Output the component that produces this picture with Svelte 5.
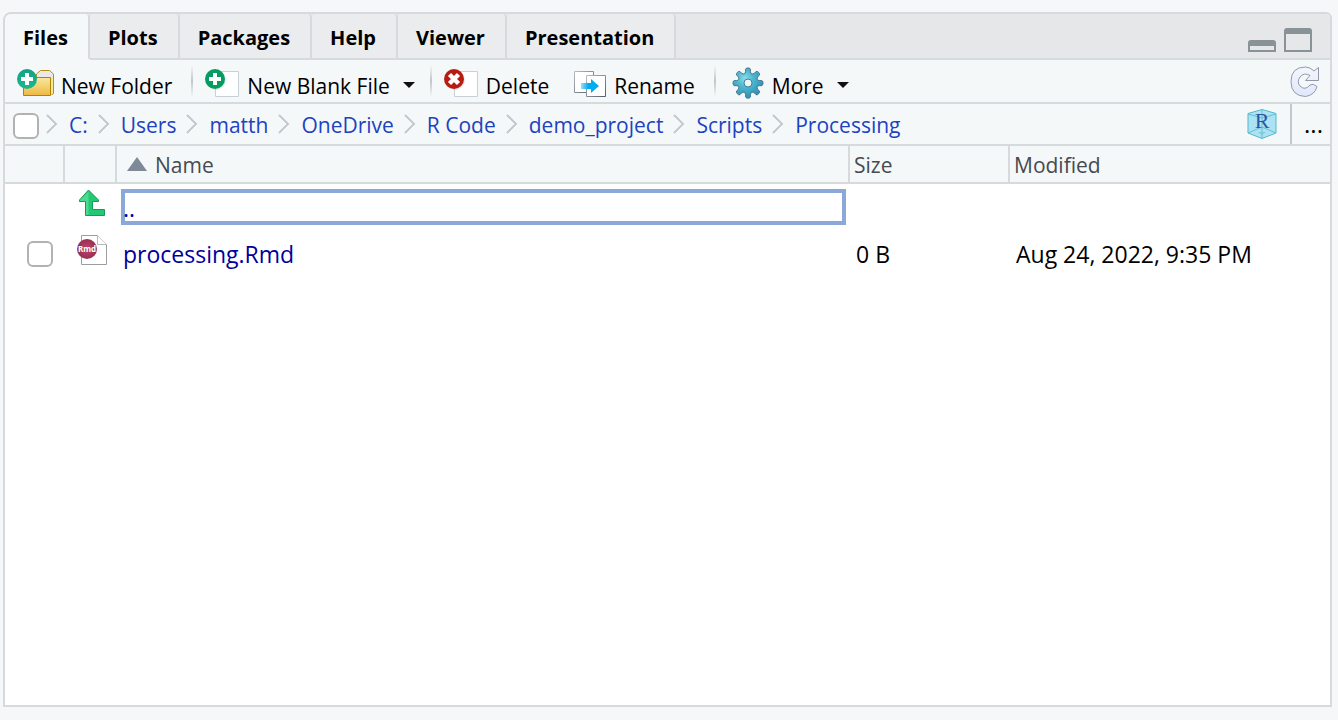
<script>
  const tabs = ['Files', 'Plots', 'Packages', 'Help', 'Viewer', 'Presentation'];
  const crumbs = ['C:', 'Users', 'matth', 'OneDrive', 'R Code', 'demo_project', 'Scripts', 'Processing'];
  let active = $state('Files');
  let all = $state(false);
  let picked = $state(false);
  // Outline of an eight-toothed gear centred on (16, 16)
  const gear = Array.from({ length: 8 }, (_, i) => {
    const p = (r, deg) => {
      const a = ((i * 45 + deg) * Math.PI) / 180;
      return `${(16 + r * Math.sin(a)).toFixed(2)} ${(16 - r * Math.cos(a)).toFixed(2)}`;
    };
    return `${i ? 'L' : 'M'}${p(11.5, -12)}L${p(14, -10)}Q${p(15.4, -7)} ${p(15, 0)}Q${p(15.4, 7)} ${p(14, 10)}L${p(11.5, 12)}Q${p(8.5, 22.5)} ${p(11.5, 33)}`;
  }).join('') + 'Z';
</script>

{#snippet chevron()}
  <svg class="chevron" width="12" height="20" viewBox="0 0 12 20" aria-hidden="true">
    <path d="M2 3L10 11L2 19" fill="none" stroke="#fff" stroke-width="2" />
    <path d="M1 1L10 10L1 19" fill="none" stroke="#c3c7cf" stroke-width="2" />
  </svg>
{/snippet}

{#snippet plus(fill)}
  <circle cx="10" cy="11" r="10" {fill} />
  <path d="M8 5h4v4h4v4h-4v4H8v-4H4V9h4z" fill="#fff" />
{/snippet}

<main class="panel">
  <div class="tabbar">
    <div class="tabs" role="tablist">
      {#each tabs as tab}
        <button role="tab" class="tab" class:active={tab === active} aria-selected={tab === active} onclick={() => (active = tab)}>{tab}</button>
      {/each}
    </div>
    <button class="window" aria-label="Minimize">
      <svg width="28" height="24" viewBox="0 0 28 24"><path d="M0 24V15Q0 12 3 12H25Q28 12 28 15V24ZM2 18V22H26V18Z" fill="#889297" fill-rule="evenodd" /></svg>
    </button>
    <button class="window" aria-label="Maximize">
      <svg width="28" height="24" viewBox="0 0 28 24"><path d="M0 24V3Q0 0 3 0H25Q28 0 28 3V24ZM2 6V22H26V6Z" fill="#889297" fill-rule="evenodd" /></svg>
    </button>
  </div>

  <div class="toolbar">
    <button class="tool">
      <svg width="38" height="30" viewBox="0 0 38 30">
        <defs>
          <linearGradient id="folder" x2="0" y2="1"><stop stop-color="#f7e8a0" /><stop offset="1" stop-color="#efb941" /></linearGradient>
          <linearGradient id="mint" x2="0" y2="1"><stop stop-color="#13a184" /><stop offset="1" stop-color="#1ab990" /></linearGradient>
        </defs>
        <path d="M19.500 9V6L23.500 2.500H32.500L36.500 6V25Q36.500 26.500 34.500 26.500H20Z" fill="#e9e9ea" stroke="#b98c12" />
        <path d="M34 9H36V25L34 27Z" fill="#f7e7a5" />
        <path d="M6.500 9.500H33.500V27.500H6.500Z" fill="url(#folder)" stroke="#b58200" />
        {@render plus('url(#mint)')}
      </svg>
      <span>New Folder</span>
    </button>
    <i class="rule"></i>
    <button class="tool">
      <svg width="36" height="30" viewBox="0 0 36 30">
        <path d="M10.500 3.500H33.500V28.500H10.500Z" fill="#fff" stroke="#c9d1d8" />
        <circle cx="11" cy="12" r="10" fill="#809b9030" />
        {@render plus('#059c62')}
      </svg>
      <span>New Blank File</span>
      <i class="caret"></i>
    </button>
    <i class="rule after-menu"></i>
    <button class="tool">
      <svg width="36" height="30" viewBox="0 0 36 30">
        <path d="M10.500 3.500H33.500V28.500H10.500Z" fill="#fff" stroke="#c9d1d8" />
        <circle cx="11" cy="12" r="10" fill="#9a757030" />
        <circle cx="10" cy="11" r="10" fill="#b71c12" />
        <path d="M5.500 6.500L14.500 15.500M14.500 6.500L5.500 15.500" stroke="#fff" stroke-width="4.500" />
      </svg>
      <span>Delete</span>
    </button>
    <button class="tool rename">
      <svg width="32" height="30" viewBox="0 0 32 30">
        <defs>
          <linearGradient id="arrow"><stop stop-color="#9adffa" /><stop offset=".4" stop-color="#00aef0" /></linearGradient>
          <linearGradient id="edge" x2="1" y2="1"><stop stop-color="#b8bcc2" /><stop offset="1" stop-color="#555e69" /></linearGradient>
        </defs>
        <path d="M.5 3.500H19.500V24.500H.5Z" fill="#fff" stroke="url(#edge)" />
        <path d="M12.500 7.500H31.500V28.500H12.500Z" fill="#fff" stroke="url(#edge)" />
        <path d="M7 15H17V11L25 18L17 25V21H7Z" fill="url(#arrow)" />
      </svg>
      <span>Rename</span>
    </button>
    <i class="rule"></i>
    <button class="tool more">
      <svg width="32" height="30" viewBox="0 0 32 30" overflow="visible">
        <defs><radialGradient id="gear" cx=".4" cy=".35" r=".65"><stop stop-color="#8bdde7" /><stop offset=".4" stop-color="#50b9d0" /><stop offset="1" stop-color="#2c92bb" /></radialGradient></defs>
        <path d={gear} fill="#c9ced2" />
        <path d={gear} transform="translate(0 -1)" fill="url(#gear)" stroke="#47778a" />
        <circle cx="16" cy="15" r="4" fill="#eef5f7" stroke="#3f8298" />
      </svg>
      <span>More</span>
      <i class="caret"></i>
    </button>
    <button class="refresh" aria-label="Refresh">
      <svg width="30" height="32" viewBox="0 0 30 32">
        <defs><linearGradient id="fresh" x2="0" y2="1"><stop stop-color="#f3f6fc" /><stop offset="1" stop-color="#dfe8fb" /></linearGradient></defs>
        <path d="M24 5L28.500 1.500V14.500H15.500L20 9.500Q14 6 10 11Q6.500 16 10 20Q15 25 20 19Q23 17 27 20.500Q25 29 15.500 30.500Q1 30 1 15.500Q1 1 15.500 1Q20 1 24 5Z" fill="url(#fresh)" stroke="#9298aa" stroke-linejoin="round" />
      </svg>
    </button>
  </div>

  <nav class="path" aria-label="Folder path">
    <input type="checkbox" aria-label="Select all files" bind:checked={all} />
    {#each crumbs as crumb}
      {@render chevron()}
      <a href="#top">{crumb}</a>
    {/each}
    <button class="project" aria-label="Go to project directory">
      <svg width="30" height="30" viewBox="0 0 30 30">
        <path d="M15 .5L29 4.500V24L15 29.500L1 24V4.500Z" fill="#ace2f3" stroke="#52b9cd" />
        <path d="M1 5L15 9L29 5M15 9V29M15 1V9M1 24L15 18L29 24" fill="none" stroke="#62bfd2" />
        <path d="M11 23H19L15 26Z" fill="#83c9dc" />
        <text x="15" y="19" text-anchor="middle" fill="#2857a5">R</text>
      </svg>
    </button>
    <button class="browse" aria-label="Go to directory">...</button>
  </nav>

  <table>
    <colgroup><col class="c-check" /><col class="c-icon" /><col class="c-name" /><col class="c-size" /><col class="c-date" /></colgroup>
    <thead>
      <tr>
        <th></th><th></th>
        <th><svg width="20" height="14" viewBox="0 0 20 14"><path d="M10 0L20 14H0Z" fill="#7f8998" /></svg>Name</th>
        <th>Size</th><th>Modified</th>
      </tr>
    </thead>
    <tbody>
      <tr class="up">
        <td></td>
        <td class="icon">
          <svg width="28" height="28" viewBox="0 0 28 28">
            <path d="M11.500 1L21.500 11V12.500H15.500V20.500H27.500V26.500H8.500V12.500H2.500V11Z" fill="#22c873" stroke="#159b56" />
            <path d="M11.500 2.500V26H9V12H3V11Z" fill="#4ed990" />
          </svg>
        </td>
        <td><a class="parent" href="#top">..</a></td>
        <td></td><td></td>
      </tr>
      <tr>
        <td class="check"><input type="checkbox" aria-label="Select processing.Rmd" bind:checked={picked} /></td>
        <td class="icon">
          <svg width="30" height="32" viewBox="0 0 30 32">
            <defs><radialGradient id="rmd"><stop stop-color="#c14374" /><stop offset="1" stop-color="#96304f" /></radialGradient></defs>
            <path d="M4.500 1.500H20.500L29.500 10.500V30.500H4.500Z" fill="#fff" stroke="#9a9da2" />
            <path d="M20.500 1.500V10.500H29.500" fill="#fff" stroke="#b8babd" />
            <circle cx="10" cy="15" r="10" fill="url(#rmd)" />
            <text class="badge" x="10" y="18" text-anchor="middle" fill="#fff">Rmd</text>
          </svg>
        </td>
        <td><a href="#file">processing.Rmd</a></td>
        <td>0 B</td>
        <td>Aug 24, 2022, 9:35 PM</td>
      </tr>
    </tbody>
  </table>
</main>

<style>
  :global(body) { margin: 0; background: #f6f7f9; }
  :global(#app) { min-height: 100vh; display: flex; }
  * { box-sizing: border-box; }
  .panel {
    flex: 1;
    margin: 12px 6px 13px 3px;
    border: 2px solid #d6dadc;
    border-radius: 8px 6px 0 0;
    background: #fff;
    font: 21px/30px "Open Sans", "Noto Sans", sans-serif;
    color: #000;
    overflow: hidden;
  }
  button { border: 0; padding: 0; background: none; font: inherit; color: inherit; white-space: nowrap; }
  svg { display: block; flex: none; }
  .tabbar { display: flex; background: #e6e7e9; height: 46px; border-bottom: 2px solid #d6dadc; }
  .tabs { display: flex; flex: 1; height: 46px; }
  .tab {
    padding: 4px 20px 0 18px;
    border-right: 2px solid #d6dadc;
    border-bottom: 2px solid #d6dadc;
    border-radius: 4px 4px 0 0;
    background: #ebecee;
    font-size: 20px;
    font-weight: 700;
  }
  .tab.active { background: #f4f8f9; border-bottom-color: #f4f8f9; }
  .window { margin: 14px 8px 0 0; height: 24px; }
  .window:last-child { margin-right: 18px; }
  .toolbar { display: flex; align-items: center; height: 44px; padding: 4px 10px 0 12px; background: #f4f8f9; border-bottom: 2px solid #d6dadc; }
  .tool { display: flex; align-items: center; }
  .tool span { margin: 6px 0 0 6px; }
  .rename { margin-left: 25px; }
  .rename span, .more span { margin-left: 8px; }
  .rule { width: 2px; height: 32px; margin: -4px 12px 0 19px; background: linear-gradient(#f4f8f9, #c2c6c9 50%, #f4f8f9); }
  .rule.after-menu { margin-left: 15px; }
  .rename + .rule { margin-right: 16px; }
  .caret { margin: 4px 0 0 13px; border: 6px solid transparent; border-top-color: #111; border-bottom: 0; }
  .refresh { margin: -2px 0 0 auto; }
  .path { display: flex; align-items: center; height: 42px; padding-left: 8px; background: #f4f8f9; border-bottom: 2px solid #d6dadc; white-space: nowrap; }
  .path a { color: #2142c0; text-decoration: none; margin: 2px 10px 0 11px; }
  .path input + .chevron { margin-left: 7px; }
  input {
    appearance: none;
    flex: none;
    display: block;
    width: 26px;
    height: 26px;
    margin: 0;
    border: 2px solid #b2b2b2;
    border-radius: 6px;
    background: #fff;
  }
  .path input { margin-top: 3px; }
  input:checked { background: #8aa9d9; }
  .project { margin: 0 13px 0 auto; }
  .project text { font: 22px "Liberation Serif", serif; }
  .browse { align-self: stretch; width: 40px; padding: 0 0 0 5px; border-left: 2px solid #c3c7cc; font-size: 24px; }
  table { width: 100%; table-layout: fixed; border-collapse: separate; border-spacing: 0; }
  .c-check { width: 60px; }
  .c-icon { width: 52px; }
  .c-size { width: 160px; }
  .c-date { width: 320px; }
  th {
    height: 38px;
    padding: 2px 4px 0;
    background: #f4f8f9;
    border-right: 2px solid #d6dadc;
    border-bottom: 2px solid #d6dadc;
    color: #474a50;
    font-weight: 400;
    text-align: left;
  }
  th:last-child { border-right: 0; }
  th svg { display: inline-block; margin: 0 8px 0 6px; vertical-align: 2px; }
  td { height: 48px; padding: 0 6px; font-size: 23px; white-space: nowrap; }
  .up td { height: 46px; padding: 0 4px; }
  td a { color: #00009c; text-decoration: none; }
  .parent { display: block; height: 36px; border: 4px solid #8aa9d9; line-height: 30px; text-indent: -2px; }
  td.check { padding-left: 22px; }
  td.icon, .up td.icon { padding: 0 0 9px 12px; }
  .badge { font: 700 8px "Open Sans", sans-serif; }
</style>
